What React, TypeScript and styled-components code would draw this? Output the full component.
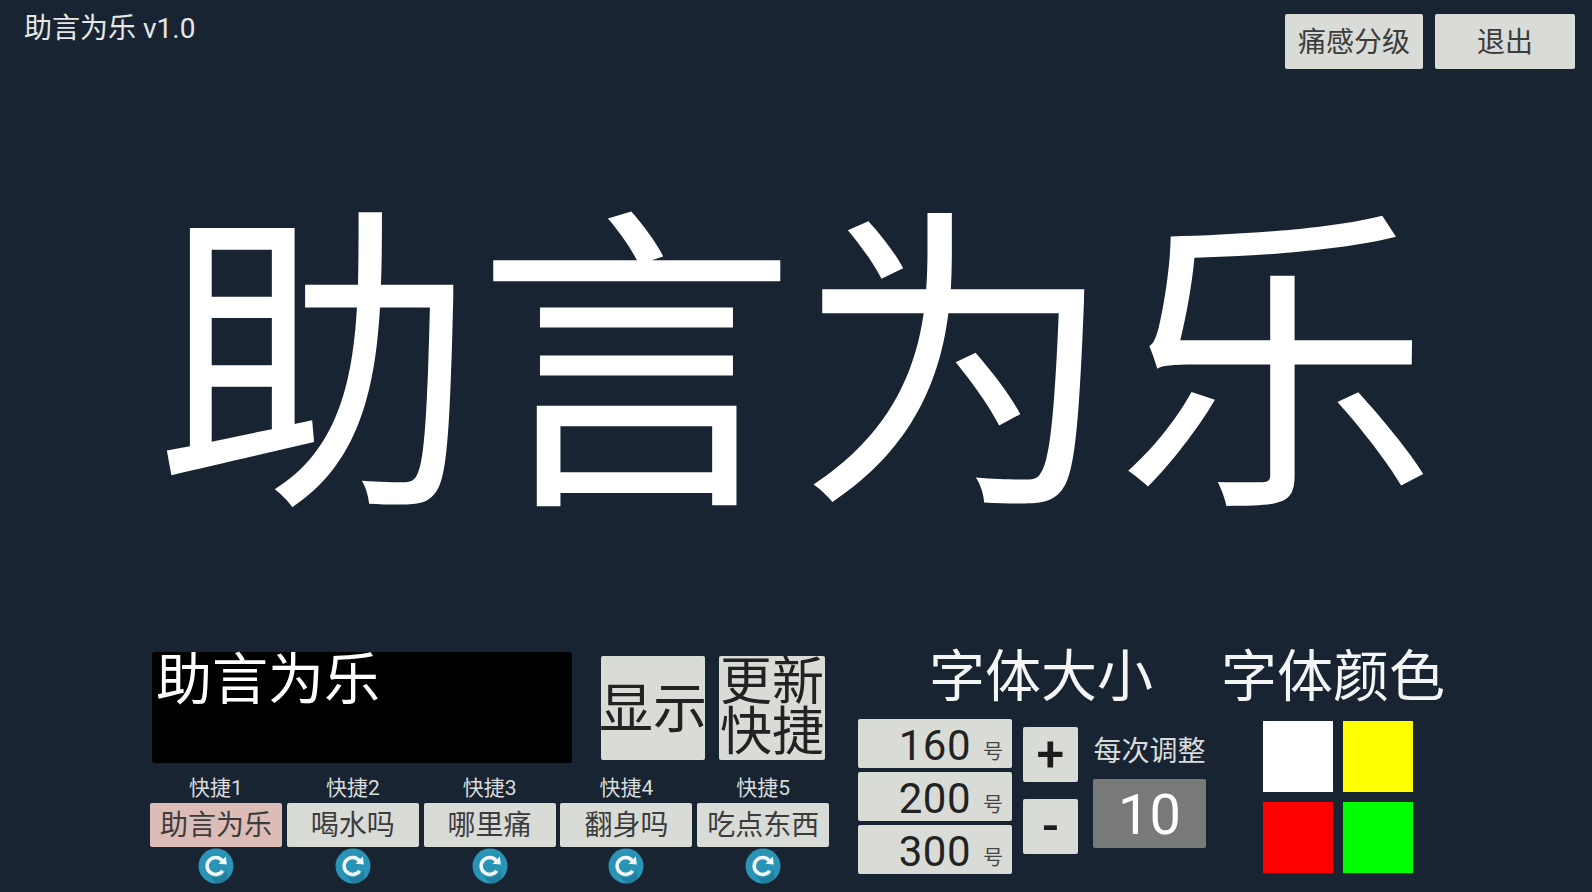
import React from 'react'
import styled, { createGlobalStyle } from 'styled-components'

const FONT = `Roboto, "Noto Sans CJK SC", "Noto Sans", sans-serif`

const GlobalStyle = createGlobalStyle`
  html, body {
    margin: 0;
    padding: 0;
    background: #192432;
    overflow: hidden;
  }
  * {
    box-sizing: border-box;
  }
`

const Page = styled.div`
  display: flex;
  flex-direction: column;
  width: 1592px;
  height: 892px;
  background: #192432;
  font-family: ${FONT};
  color: #fff;
`

const Header = styled.header`
  display: flex;
  justify-content: space-between;
  align-items: flex-start;
  height: 69px;
  padding: 14px 17px 0 24px;
`

const AppTitle = styled.div`
  font-size: 28px;
  line-height: 29px;
  color: #e6e8e6;
`

const HeaderActions = styled.div`
  display: flex;
  gap: 12px;
`

const Button = styled.button`
  display: flex;
  align-items: center;
  justify-content: center;
  border: none;
  border-radius: 2px;
  padding: 0;
  background: #d9dbd7;
  color: #333;
  font-family: ${FONT};
`

const HeaderButton = styled(Button)<{ $width: number }>`
  width: ${({ $width }) => $width}px;
  height: 55px;
  padding-bottom: 4px;
  font-size: 28px;
  color: #3c3c3c;
`

const Stage = styled.main`
  display: flex;
  flex: 1;
  align-items: center;
  justify-content: center;
  padding-top: 30px;
  font-size: 320px;
  line-height: 1;
  white-space: nowrap;
`

const Bottom = styled.section`
  display: flex;
  align-items: flex-start;
  height: 247px;
  padding-left: 150px;
`

const Composer = styled.div`
  display: flex;
  flex-direction: column;
  flex-shrink: 0;
  width: 680px;
  margin-right: 28px;
`

const ComposerTop = styled.div`
  display: flex;
  align-items: center;
  gap: 14px;
  height: 111px;
  margin: 7px 0 0 2px;
`

const TextBox = styled.div`
  flex-shrink: 0;
  width: 420px;
  height: 111px;
  margin-right: 15px;
  padding: 0 4px;
  border-radius: 3px;
  background: #000;
  font-size: 56px;
  line-height: 56px;
`

const BigButton = styled(Button)<{ $width: number }>`
  flex-shrink: 0;
  width: ${({ $width }) => $width}px;
  height: 104px;
  font-size: 52px;
  line-height: 50px;
  color: #222;
`

const BigButtonLabel = styled.span`
  display: block;
  width: 2em;
`

const ShowLabel = styled(BigButtonLabel)`
  padding-top: 4px;
  font-size: 54px;
  white-space: nowrap;
`

const Shortcuts = styled.div`
  display: grid;
  grid-template-columns: repeat(5, 132px);
  column-gap: 4.8px;
  margin-top: 12px;
`

const Shortcut = styled.div`
  display: flex;
  flex-direction: column;
  align-items: center;
`

const ShortcutLabel = styled.div`
  height: 28px;
  font-size: 21px;
  line-height: 26px;
  color: #d8dcdc;
`

const ShortcutButton = styled(Button)<{ $active?: boolean }>`
  width: 100%;
  height: 44px;
  padding-bottom: 4px;
  font-size: 28px;
  color: #3c3c3c;
  background: ${({ $active }) => ($active ? '#dcbcb7' : '#d9dbd7')};
`

const RefreshWrap = styled.div`
  width: 36px;
  height: 36px;
  margin-top: 1px;
`

const SizePanel = styled.div`
  display: flex;
  flex-direction: column;
  flex-shrink: 0;
  width: 350px;
  margin-right: 16px;
`

const SectionTitle = styled.div`
  height: 74px;
  padding-top: 2px;
  font-size: 56px;
  line-height: 60px;
  text-align: center;
  color: #f4f5f5;
  white-space: nowrap;
`

const SizeTitle = styled(SectionTitle)`
  padding-left: 71px;
  text-align: left;
`

const SizeBody = styled.div`
  display: flex;
  align-items: flex-start;
`

const SizeList = styled.div`
  display: flex;
  flex-direction: column;
  gap: 4px;
  width: 154px;
  margin-right: 11px;
`

const SizeButton = styled(Button)`
  justify-content: flex-end;
  align-items: center;
  width: 100%;
  height: 49px;
  padding-right: 9px;
  color: #222;
`

const SizeValue = styled.span`
  padding-top: 4px;
  font-size: 42px;
  line-height: 49px;
  letter-spacing: 0.5px;
`

const SizeUnit = styled.span`
  margin: 16px 0 0 12px;
  font-size: 20px;
  line-height: 22px;
  color: #444;
`

const StepButtons = styled.div`
  display: flex;
  flex-direction: column;
  gap: 17px;
  width: 55px;
  margin: 8px 15px 0 0;
`

const StepButton = styled(Button)`
  width: 55px;
  height: 55px;
  font-size: 50px;
  font-weight: 500;
  line-height: 55px;
  color: #1c1c1c;
`

const StepPanel = styled.div`
  display: flex;
  flex-direction: column;
  width: 113px;
  margin-top: 17px;
`

const StepLabel = styled.div`
  height: 43px;
  font-size: 28px;
  line-height: 32px;
  text-align: center;
  color: #d8dcdc;
  white-space: nowrap;
`

const StepValue = styled.div`
  display: flex;
  align-items: center;
  justify-content: center;
  height: 69px;
  padding-top: 4px;
  border-radius: 2px;
  background: #777a79;
  font-size: 56px;
  line-height: 65px;
`

const ColorPanel = styled.div`
  display: flex;
  flex-direction: column;
  align-items: center;
  flex-shrink: 0;
  width: 218px;
`

const Swatches = styled.div`
  display: grid;
  grid-template-columns: repeat(2, 70px);
  grid-auto-rows: 71px;
  gap: 10px;
  margin-top: 2px;
  margin-left: 10px;
`

const Swatch = styled.div<{ $color: string }>`
  background: ${({ $color }) => $color};
`

const RefreshIcon = () => (
  <svg width="36" height="36" viewBox="0 0 36 36" aria-hidden="true">
    <circle cx="18" cy="18" r="17.5" fill="#2a94b7" />
    <path d="M10 26 A11 11 0 0 0 29 18 L29 31 A17.5 17.5 0 0 1 18 35.5 Z" fill="#237f9f" />
    <path
      d="M24.6 22.8 A8.5 8.5 0 1 1 24.2 12.6"
      fill="none"
      stroke="#f3f7f8"
      strokeWidth="3.6"
    />
    <path d="M20.5 15.8 L28.8 16.6 L27.8 8.4 Z" fill="#f3f7f8" />
  </svg>
)

const shortcuts = ['助言为乐', '喝水吗', '哪里痛', '翻身吗', '吃点东西']
const sizes = ['160', '200', '300']
const colors = ['#ffffff', '#ffff00', '#ff0000', '#00ff00']

export default function App() {
  return (
    <Page>
      <GlobalStyle />
      <Header>
        <AppTitle>助言为乐 v1.0</AppTitle>
        <HeaderActions>
          <HeaderButton $width={138}>痛感分级</HeaderButton>
          <HeaderButton $width={140}>退出</HeaderButton>
        </HeaderActions>
      </Header>
      <Stage>助言为乐</Stage>
      <Bottom>
        <Composer>
          <ComposerTop>
            <TextBox>助言为乐</TextBox>
            <BigButton $width={104}>
              <ShowLabel>显示</ShowLabel>
            </BigButton>
            <BigButton $width={106}>
              <BigButtonLabel>更新快捷</BigButtonLabel>
            </BigButton>
          </ComposerTop>
          <Shortcuts>
            {shortcuts.map((text, i) => (
              <Shortcut key={text}>
                <ShortcutLabel>快捷{i + 1}</ShortcutLabel>
                <ShortcutButton $active={i === 0}>{text}</ShortcutButton>
                <RefreshWrap>
                  <RefreshIcon />
                </RefreshWrap>
              </Shortcut>
            ))}
          </Shortcuts>
        </Composer>
        <SizePanel>
          <SizeTitle>字体大小</SizeTitle>
          <SizeBody>
            <SizeList>
              {sizes.map(size => (
                <SizeButton key={size}>
                  <SizeValue>{size}</SizeValue>
                  <SizeUnit>号</SizeUnit>
                </SizeButton>
              ))}
            </SizeList>
            <StepButtons>
              <StepButton>+</StepButton>
              <StepButton>-</StepButton>
            </StepButtons>
            <StepPanel>
              <StepLabel>每次调整</StepLabel>
              <StepValue>10</StepValue>
            </StepPanel>
          </SizeBody>
        </SizePanel>
        <ColorPanel>
          <SectionTitle>字体颜色</SectionTitle>
          <Swatches>
            {colors.map(color => (
              <Swatch key={color} $color={color} />
            ))}
          </Swatches>
        </ColorPanel>
      </Bottom>
    </Page>
  )
}
